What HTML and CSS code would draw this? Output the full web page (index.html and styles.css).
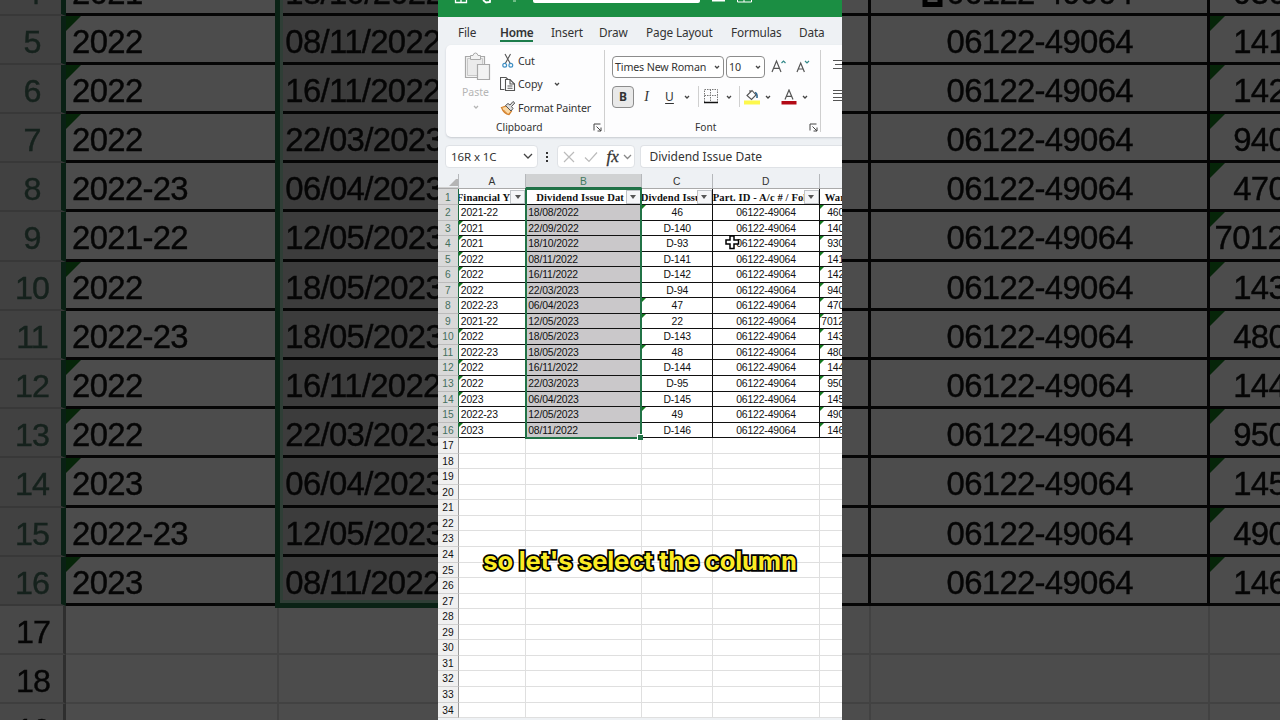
FILE: index.html
```html
<!DOCTYPE html>
<html lang="en">
<head>
    <meta charset="UTF-8">
    <meta name="viewport" content="width=device-width, initial-scale=1.0">
    <title>Dividend sheet</title>
    <link rel="stylesheet" href="styles.css">
</head>
<body>
    <!-- Enlarged sheet, left side -->
    <div class="side">
        <div class="sheet side-sheet" id="sheetLeft"></div>
    </div>

    <main class="phone">
        <div class="titlebar">
            <svg class="title-icons" width="95" height="6" viewBox="0 0 95 6" fill="none" stroke="#fff">
                <path d="M17.5 0v2.5h11V0M23 0v3" stroke-width="1.3"/>
                <path d="M45 0l3 2.5 4-.5V0" stroke-width="1.8"/>
                <path d="M75 1h3" stroke="#6fbd87" stroke-width="2"/>
            </svg>
            <div class="search"></div>
            <svg class="title-icons" width="60" height="6" viewBox="0 0 60 6" fill="none" stroke="#fff">
                <path d="M12 .5h13" stroke-width="2"/>
                <path d="M37.500 0v2h14V0M44 0v2"/>
            </svg>
        </div>

        <nav class="tabs">
            <span class="tab tab-file">File</span>
            <span class="tab tab-home active">Home</span>
            <span class="tab tab-insert">Insert</span>
            <span class="tab tab-draw">Draw</span>
            <span class="tab tab-layout">Page Layout</span>
            <span class="tab tab-formulas">Formulas</span>
            <span class="tab tab-data">Data</span>
        </nav>

        <div class="ribbon">
            <section class="group clipboard">
                <div class="group-body">
                    <div class="paste">
                        <svg width="27" height="29" viewBox="0 0 27 29" fill="#f3f3f3" stroke="#a9a9a9">
                            <path d="M1.500 4.500h19v21h-19z" stroke-width="1.200"/>
                            <path d="M3.500 6.500h15v17h-15z" fill="#ebebeb" stroke="#c9c9c9"/>
                            <path d="M6.500 7.500v-4h2.500q.5-2.500 2.500-2.500t2.500 2.500h2.500v4z"/>
                            <path d="M13.500 12.500h12v15h-12z" stroke-width="1.200"/>
                        </svg>
                        <span>Paste</span>
                        <svg class="chev" width="6" height="4" viewBox="0 0 6 4"><path d="M1 1l2 2 2-2"/></svg>
                    </div>
                    <div class="actions">
                        <div class="action">
                            <svg width="16" height="16" viewBox="0 0 16 16" fill="none">
                                <path d="M5 1l5.500 10M10.500 1L5 11" stroke="#555" stroke-width="1.100"/>
                                <circle cx="4.700" cy="12.300" r="1.900" stroke="#3f8fc4" stroke-width="1.200"/>
                                <circle cx="10.800" cy="12.300" r="1.900" stroke="#3f8fc4" stroke-width="1.200"/>
                            </svg>
                            <span>Cut</span>
                        </div>
                        <div class="action">
                            <svg width="16" height="16" viewBox="0 0 16 16" fill="none" stroke="#555" stroke-width="1.100">
                                <path d="M4.500 13.500h-4V1.500h5.500l2 2"/>
                                <path d="M5.500 3.500h4.500l4.500 4.500v6.500h-9z" fill="#fff"/>
                                <path d="M10 3.500V8h4.500M7.500 10h5M7.500 12.300h5"/>
                            </svg>
                            <span>Copy</span>
                            <svg class="chev copy-chev" width="6" height="4" viewBox="0 0 6 4"><path d="M1 1l2 2 2-2"/></svg>
                        </div>
                        <div class="action">
                            <svg width="16" height="16" viewBox="0 0 16 16" stroke-width="1">
                                <path d="M1.500 7.500l5-1.500 5 5-2.500 3.500q-5-.5-7.500-7z" fill="#fbd9a6" stroke="#d4812b" stroke-width="1.300"/>
                                <path d="M3.500 10l3 3" stroke="#d4812b"/>
                                <path d="M5.500 5.500L8 3.500l2 1.500 3-3.500 1.800 1.500-3.300 3.500L13 8.500 11 11z" fill="#ddd" stroke="#555"/>
                            </svg>
                            <span>Format Painter</span>
                        </div>
                    </div>
                </div>
                <div class="group-label">Clipboard
                    <svg class="launcher" width="9" height="9" viewBox="0 0 9 9"><path d="M1 7.500V1h6.500M3.500 3.500L8 8M8 4.500V8H4.500"/></svg>
                </div>
            </section>

            <section class="group font">
                <div class="font-row">
                    <div class="select font-name">Times New Roman
                        <svg class="chev" width="6" height="4" viewBox="0 0 6 4"><path d="M1 1l2 2 2-2"/></svg>
                    </div>
                    <div class="select font-size">10
                        <svg class="chev" width="6" height="4" viewBox="0 0 6 4"><path d="M1 1l2 2 2-2"/></svg>
                    </div>
                    <svg class="grow" width="16" height="14" viewBox="0 0 16 14" fill="none" stroke="#555" stroke-width="1.200">
                        <path d="M1 13L5.500 2 10 13M2.700 9.300h5.600"/>
                        <path d="M10.500 4l2-2 2 2" stroke="#388"/>
                    </svg>
                    <svg class="shrink" width="14" height="14" viewBox="0 0 14 14" fill="none" stroke="#555" stroke-width="1.200">
                        <path d="M1 13L4.700 4l3.700 9M2.400 10h4.600"/>
                        <path d="M9 2l2 2 2-2" stroke="#388"/>
                    </svg>
                </div>
                <div class="font-row format-row">
                    <span class="bold">B</span>
                    <span class="italic">I</span>
                    <span class="underline">U</span>
                    <svg class="chev" width="6" height="4" viewBox="0 0 6 4"><path d="M1 1l2 2 2-2"/></svg>
                    <i class="divider"></i>
                    <svg class="borders" width="14" height="15" viewBox="0 0 14 15" fill="none" stroke="#777">
                        <path d="M.5 13V.5h13V13M.5 6.500h13M6.500 .5V13" stroke-dasharray="1.500 1"/>
                        <path d="M0 13.500h14" stroke="#111" stroke-width="1.500"/>
                    </svg>
                    <svg class="chev" width="6" height="4" viewBox="0 0 6 4"><path d="M1 1l2 2 2-2"/></svg>
                    <i class="divider"></i>
                    <svg class="fill" width="16" height="16" viewBox="0 0 16 16" fill="none" stroke="#555" stroke-width="1.100">
                        <path d="M0 11.500h16v4H0z" fill="#fdf84d" stroke="none"/>
                        <path d="M3 6.500L8 1.500l4 4.500-4.500 4.500zM6 3.500V1"/>
                        <path d="M11 3.500q2.500.5 2 5.500" stroke="#2c638c" stroke-width="1.600"/>
                    </svg>
                    <svg class="chev" width="6" height="4" viewBox="0 0 6 4"><path d="M1 1l2 2 2-2"/></svg>
                    <svg class="color" width="16" height="16" viewBox="0 0 16 16" fill="none" stroke="#555" stroke-width="1.200">
                        <path d="M4 10.500L8 1l4 9.500M5.500 7.300h5"/>
                        <path d="M.5 12h15v3.500H.5z" fill="#b30a16" stroke="none"/>
                    </svg>
                    <svg class="chev" width="6" height="4" viewBox="0 0 6 4"><path d="M1 1l2 2 2-2"/></svg>
                </div>
                <div class="group-label">Font
                    <svg class="launcher" width="9" height="9" viewBox="0 0 9 9"><path d="M1 7.500V1h6.500M3.500 3.500L8 8M8 4.500V8H4.500"/></svg>
                </div>
            </section>

            <section class="group align">
                <svg width="10" height="44" viewBox="0 0 10 44" stroke="#555">
                    <path d="M0 1.500h10M2 5.500h8M0 9.500h10M0 31.500h10M0 34.500h10M0 38.500h10M0 41.500h10"/>
                </svg>
            </section>
        </div>

        <div class="formula-bar">
            <div class="box name-box">16R x 1C
                <svg class="chev" width="10" height="7" viewBox="0 0 10 7"><path d="M1 1l4 4 4-4"/></svg>
            </div>
            <div class="dots"><i></i><i></i><i></i></div>
            <div class="box fx-box">
                <svg width="12" height="12" viewBox="0 0 12 12"><path d="M1 1l10 10M11 1L1 11"/></svg>
                <svg width="14" height="12" viewBox="0 0 14 12"><path d="M1 6.500l4 4L13 1.500"/></svg>
                <em>fx</em>
                <svg class="chev" width="9" height="6" viewBox="0 0 9 6"><path d="M1 1l3.500 3.500L8 1"/></svg>
            </div>
            <div class="box formula">Dividend Issue Date</div>
        </div>

        <div class="sheet" id="sheet"></div>

        <svg class="cursor" width="15" height="15" viewBox="0 0 15 15">
            <path d="M5 1h4v4h4.500v4H9v4.500H5V9H1V5h4z" fill="#fff" stroke="#000" stroke-width="1.500"/>
        </svg>

        <div class="caption">so let's select the column</div>
    </main>

    <!-- Enlarged sheet, right side -->
    <div class="side">
        <div class="sheet side-sheet side-right" id="sheetRight"></div>
        <svg class="big-cursor" width="22" height="8" viewBox="0 0 22 8"><path d="M3 0v4.500h15V0" fill="#fff" stroke="#000" stroke-width="5"/></svg>
    </div>

    <script>
        // year, date, issue no, folio, warrant (* = green error corner)
        const rows = [
            ['2021-22', '18/08/2022', '*46', '06122-49064', '*460'],
            ['*2021', '22/09/2022', 'D-140', '06122-49064', '*140'],
            ['*2021', '18/10/2022', 'D-93', '06122-49064', '*930'],
            ['*2022', '08/11/2022', 'D-141', '06122-49064', '*141'],
            ['*2022', '16/11/2022', 'D-142', '06122-49064', '*142'],
            ['*2022', '22/03/2023', 'D-94', '06122-49064', '*940'],
            ['2022-23', '06/04/2023', '*47', '06122-49064', '*470'],
            ['2021-22', '12/05/2023', '*22', '06122-49064', '*7012'],
            ['*2022', '18/05/2023', 'D-143', '06122-49064', '*143'],
            ['2022-23', '18/05/2023', '*48', '06122-49064', '*480'],
            ['*2022', '16/11/2022', 'D-144', '06122-49064', '*144'],
            ['*2022', '22/03/2023', 'D-95', '06122-49064', '*950'],
            ['*2023', '06/04/2023', 'D-145', '06122-49064', '*145'],
            ['2022-23', '12/05/2023', '*49', '06122-49064', '*490'],
            ['*2023', '08/11/2022', 'D-146', '06122-49064', '*146']
        ];
        const cols = ['a', 'b', 'c', 'd', 'e'];

        function cell(text, col) {
            const flag = text[0] === '*';
            const value = flag ? text.slice(1) : text;
            const wide = col === 'e' && value.length > 3 ? ' wide' : '';
            return `<div class="cell ${col}${wide}${flag ? ' flag' : ''}">${value}</div>`;
        }

        function buildRows(from, to, first, last, numbers) {
            let html = '';
            for (let n = from; n <= to; n++) {
                const data = rows[n - 2];
                html += `<div class="row ${data ? 'filled' : 'empty'}">`;
                // without row numbers only the blank end of column C shows
                html += numbers ? `<div class="num">${n}</div>` : '<div class="cell stub"></div>';
                for (let i = first; i <= last; i++) {
                    html += cell(data ? data[i] : '', cols[i]);
                }
                html += '</div>';
            }
            return html;
        }

        const filter = '<b class="filter"></b>';
        document.getElementById('sheet').innerHTML =
            `<div class="letters"><div class="num"><i class="corner"></i></div><div class="a">A</div><div class="b">B</div><div class="c">C</div><div class="d">D</div><div class="e"></div></div>
             <div class="row filled head"><div class="num">1</div>
                <div class="cell a"><span>Financial Y</span>${filter}</div>
                <div class="cell b"><span>Dividend Issue Dat</span>${filter}</div>
                <div class="cell c"><span>Divdend Issu</span>${filter}</div>
                <div class="cell d"><span>Part. ID - A/c # / Fol</span>${filter}</div>
                <div class="cell e"><span>War</span></div>
             </div>` + buildRows(2, 34, 0, 4, true) + '<div class="selection"></div>';
        document.getElementById('sheetLeft').innerHTML = buildRows(4, 19, 0, 1, true) + '<div class="selection"></div>';
        document.getElementById('sheetRight').innerHTML = buildRows(4, 19, 3, 4, false);
    </script>
</body>
</html>
```
FILE: styles.css
```css
* { box-sizing: border-box; }
body { margin: 0; width: 1280px; height: 720px; overflow: hidden; display: flex; background: #4c4c4c; font-family: "Liberation Sans", Arial, sans-serif; }
svg { display: block; flex: none; }

.phone { position: relative; width: 404px; height: 720px; overflow: hidden; background: #eef1f4; font-family: "Noto Sans", "Open Sans", sans-serif; color: #333; }

/* Title bar and tabs */
.titlebar { display: flex; height: 17px; background: #1b8e43; }
.search { width: 167px; height: 3px; background: #fff; border-radius: 0 0 2px 2px; }
.tabs { display: flex; height: 28px; padding-left: 20px; font-size: 11.8px; line-height: 30px; letter-spacing: -.15px; white-space: nowrap; }
.tab { flex: none; height: 25px; }
.tab-file { width: 42px; }
.tab-home { width: 33px; margin-right: 18px; }
.tab-insert { width: 48px; }
.tab-draw { width: 47px; }
.tab-layout { width: 85px; }
.tab-formulas { width: 68px; }
.tab.active { font-weight: 600; letter-spacing: -.25px; border-bottom: 2px solid #1c7c4b; }

/* Ribbon */
.ribbon { display: flex; height: 92px; margin-left: 7.5px; padding-top: 5px; background: #fdfdfe; border-radius: 5px 0 0 5px; box-shadow: 0 1px 2px #c6cad0; font-size: 10.7px; }
.group { position: relative; flex: none; height: 82px; border-right: 1px solid #cfcfcf; }
.group-label { position: absolute; left: 0; right: 0; bottom: -4px; height: 17px; line-height: 17px; text-align: center; font-size: 10.2px; }
.launcher { position: absolute; top: 4px; right: 2px; fill: none; stroke: #444; }
.chev { fill: none; stroke: #444; stroke-width: 1.3; }
.clipboard { width: 159.500px; }
.clipboard .group-label { padding-right: 11px; }
.group-body { display: flex; }
.paste { display: flex; flex-direction: column; align-items: center; width: 54px; padding: 2px 0 0 6px; color: #b5b5b5; font-size: 10.5px; }
.paste span { line-height: 14px; margin: 4px 0 6px; }
.paste svg:first-child { margin-left: 4px; }
.paste .chev { stroke: #b5b5b5; }
.actions { margin-top: -1px; }
.action { display: flex; align-items: center; gap: 2.5px; height: 23.6px; white-space: nowrap; letter-spacing: -.15px; }
.copy-chev { margin-left: 9px; }
.font { width: 215.500px; padding: 6px 0 0 7px; }
.font .group-label { padding-right: 13px; }
.font-row { display: flex; align-items: center; height: 22px; }
.select { display: flex; align-items: center; justify-content: space-between; height: 22px; padding: 0 3px 0 2px; border: 1px solid #8c8c8c; border-radius: 4px; background: #fff; white-space: nowrap; }
.font-name { width: 112px; margin-right: 2px; letter-spacing: -.15px; }
.font-size { width: 39px; }
.grow { margin: -2px 0 0 6px; }
.shrink { margin: -2px 0 0 9px; }
.format-row { margin-top: 7.5px; font-size: 12px; }
.bold { width: 22px; height: 22px; line-height: 20px; text-align: center; font-weight: 700; background: #e9e9e9; border: 1px solid #8c8c8c; border-radius: 4px; }
.italic { width: 25px; text-align: center; font-family: "Liberation Serif", serif; font-style: italic; font-size: 14px; }
.underline { width: 21px; text-align: center; text-decoration: underline; text-underline-offset: 2px; margin-right: 4px; }
.divider { width: 1px; height: 21px; margin: 0 5px 0 8px; background: #d0d0d0; }
.borders { margin-right: 8px; }
.borders ~ .divider { margin: 0 4px 0 7px; }
.fill { margin-right: 5px; }
.color { margin: 0 5px 0 10px; }
.align { width: 22px; border: 0; padding: 9px 0 0 12px; }

/* Formula bar */
.formula-bar { display: flex; height: 37px; padding: 8px 0 6px 7px; }
.box { display: flex; align-items: center; height: 23px; background: #fff; border: 1px solid #dfe2e6; border-radius: 4px; font-size: 12px; white-space: nowrap; }
.name-box { width: 92.5px; justify-content: space-between; padding: 0 4px 0 5px; font-size: 11.5px; letter-spacing: -.1px; }
.dots { display: flex; flex-direction: column; justify-content: center; align-items: center; gap: 2px; width: 19px; }
.dots i { width: 2px; height: 2px; background: #333; }
.fx-box { width: 78px; gap: 9px; padding-left: 5px; fill: none; stroke: #bbb; stroke-width: 1.2; }
.fx-box em { font: italic 17px "Liberation Serif", serif; letter-spacing: 0; -webkit-text-stroke: .3px #333; }
.fx-box .chev { margin-left: -5px; stroke: #888; }
.formula { flex: 1; margin-left: 5px; padding-left: 9px; border-right: 0; border-radius: 4px 0 0 4px; }

/* Sheet, every size is a multiple of --u */
.sheet { --u: 1px; position: relative; background: #fff; color: #111; font-family: "Liberation Sans", Arial, sans-serif; font-size: calc(var(--u) * 10.4); }
.letters, .row { display: flex; }
.letters { height: 14.5px; line-height: 16px; text-align: center; background: #eef1f4; border-bottom: 1px solid #aaa; color: #333; font-size: 10.3px; }
.letters > div { border-right: 1px solid #b5b8bb; }
.letters .num { background: none; }
.letters .b { background: #d0d2d3; color: #3f7a5f; border-bottom: 1px solid #1f6f47; }
.letters .e { border-right: 0; }
.corner { display: block; margin: 5px 0 0 11px; border-left: 7px solid transparent; border-bottom: 7px solid #b5b5b5; }
.row { height: calc(var(--u) * 15.55); line-height: calc(var(--u) * 16); }
.num { flex: none; width: calc(var(--u) * 20.8); text-align: center; border-right: 1px solid #999; border-bottom: 1px solid #d0d0d0; background: #f0f0f0; font-size: calc(var(--u) * 10.2); letter-spacing: 0; }
.filled .num { background: #d9d9d9; color: #456f5d; border-right: calc(var(--u) * 1.3) solid #1d6b42; border-bottom-color: #bbb; }
.cell { position: relative; overflow: hidden; white-space: nowrap; border-right: 1px solid #dfdfdf; border-bottom: 1px solid #dfdfdf; letter-spacing: calc(var(--u) * -.15); }
.filled .cell { border-color: #111; border-width: 0 calc(var(--u) * 1) calc(var(--u) * 1) 0; }
.a { flex: none; width: calc(var(--u) * 67.4); }
.b { flex: none; width: calc(var(--u) * 115.5); }
.c { flex: none; width: calc(var(--u) * 71); text-align: center; }
.d { flex: none; width: calc(var(--u) * 107); text-align: center; }
.e { flex: 1; }
.cell.a { padding-left: calc(var(--u) * 2); }
.cell.b { padding-left: calc(var(--u) * 2); }
.cell.c { padding-left: calc(var(--u) * 1); }
.cell.d { padding-left: calc(var(--u) * .6); }
.cell.e { padding-left: calc(var(--u) * 7.5); }
.filled .cell.e, .empty .cell.e { border-right: 0; }
.cell.e.wide { padding-left: calc(var(--u) * 1.6); }
.filled .cell.b { background: #cac8ca; }
.flag::before { content: ""; position: absolute; left: 0; top: 0; border-top: calc(var(--u) * 4.8) solid #137b1f; border-right: calc(var(--u) * 4.8) solid transparent; }

.row.head { height: 16.5px; line-height: 18px; }
.head .cell { padding: 0; font-family: "Liberation Serif", "Times New Roman", serif; font-weight: 700; font-size: 10.6px; letter-spacing: .1px; }
.head .cell.b { background: #fff; padding-left: 10px; }
.head .cell.e { padding-left: 5px; }
.head .cell.a span { margin-left: -2px; }
.head .cell.c span { float: left; margin-left: -1px; }
.head .cell.d span { float: left; }
.filter { position: absolute; right: 0; top: 1px; width: 15px; height: 14px; background: #f5f6f8; border: 1px solid #c0c3c7; }
.filter::after { content: ""; position: absolute; left: 3.5px; top: 4px; border: 3px solid transparent; border-top: 4px solid #555; }

/* Green frame round the selected column */
.selection { position: absolute; left: 87px; top: 14px; width: 117px; height: 250.500px; border: 2px solid #217346; }
.selection::after { content: ""; position: absolute; right: -3px; bottom: -3px; width: 5px; height: 5px; background: #217346; border: 1px solid #fff; border-width: 1px 0 0 1px; }

/* Side panels: same sheet, enlarged and darkened */
.side { position: relative; width: 438px; height: 720px; overflow: hidden; background: #fff; filter: brightness(.298); }
.side-sheet { --u: 3.164px; margin-top: -33.5px; }
.side .row { overflow: hidden; line-height: calc(var(--u) * 16.7); -webkit-text-stroke: .4px; }
.side .num { border-right-width: 3px; border-bottom-width: 2px; padding-left: 3px; letter-spacing: -1px; }
.side .filled .num { border-right-width: 5px; }
.side .cell { letter-spacing: calc(var(--u) * -.22); }
.side .filled .cell { border-right-width: 3px; border-bottom-width: 3px; }
.side .empty .cell { border-right-width: 2px; border-bottom-width: 2px; }
.side .filled .cell.e, .side .empty .cell.e { border-right-width: 0; }
.stub { flex: none; width: 29px; }
.side .selection { left: 275px; top: -20px; width: 240px; height: 661px; border-width: 5px; box-shadow: inset 3px 0 #9fd0b4, inset 0 -3px #9fd0b4; }
.big-cursor { position: absolute; left: 80px; top: 0; }

.cursor { position: absolute; left: 287px; top: 235px; }
.caption { position: absolute; left: 0; right: 0; top: 545px; text-align: center; font: 700 25.5px/32px Inter, sans-serif; letter-spacing: -.15px; color: #fbec24; -webkit-text-stroke: 3.4px #000; paint-order: stroke fill; white-space: nowrap; }
```
